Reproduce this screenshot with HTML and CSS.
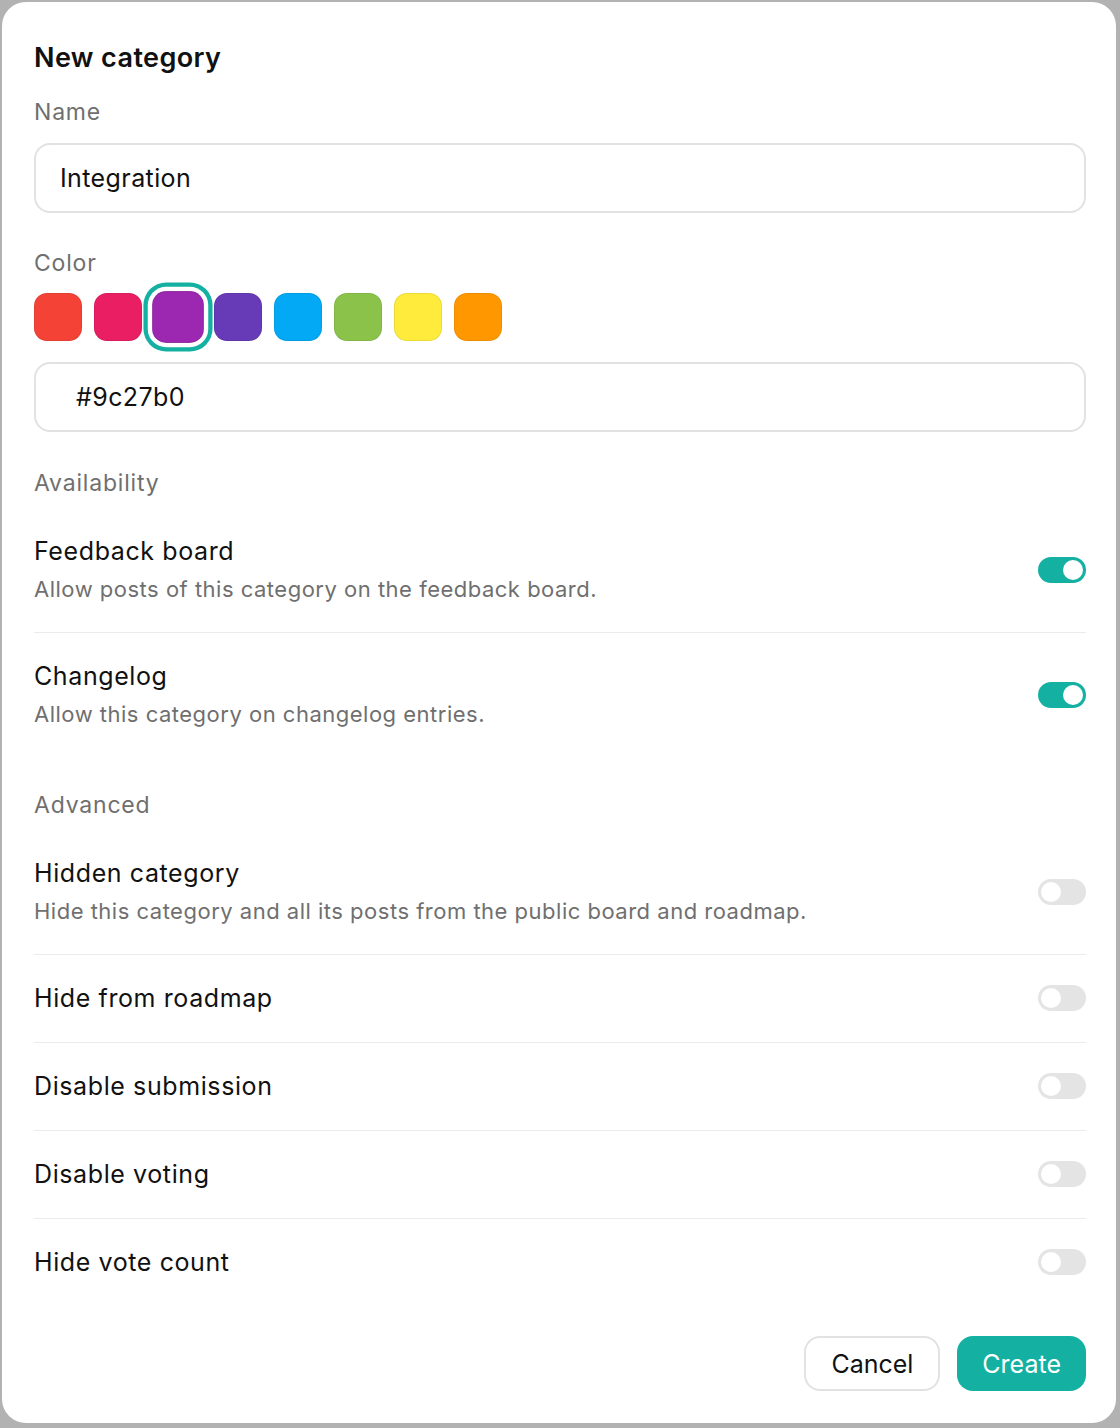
FILE: index.html
```html
<!DOCTYPE html>
<html lang="en">

<head>
    <meta charset="UTF-8">
    <meta name="viewport" content="width=device-width, initial-scale=1.0">
    <title>New category</title>
    <link rel="stylesheet" href="styles.css">
</head>

<body>
    <div class="dialog">
        <h1 class="dialog-title">New category</h1>

        <label class="field-label" for="name">Name</label>
        <input class="text-input" id="name" type="text" value="Integration">

        <div class="field-label color-label">Color</div>
        <div class="swatches">
            <button class="swatch" style="background:#f44336"></button>
            <button class="swatch" style="background:#e91e63"></button>
            <button class="swatch selected" style="background:#9c27b0"></button>
            <button class="swatch" style="background:#673ab7"></button>
            <button class="swatch" style="background:#03a9f4"></button>
            <button class="swatch" style="background:#8bc34a"></button>
            <button class="swatch" style="background:#ffeb3b"></button>
            <button class="swatch" style="background:#ff9800"></button>
        </div>
        <input class="text-input hex-input" type="text" value="#9c27b0">

        <div class="section-label">Availability</div>
        <div class="setting-list">
            <div class="setting">
                <div class="setting-text">
                    <div class="setting-title">Feedback board</div>
                    <div class="setting-desc">Allow posts of this category on the feedback board.</div>
                </div>
                <span class="toggle on"></span>
            </div>
            <div class="setting">
                <div class="setting-text">
                    <div class="setting-title">Changelog</div>
                    <div class="setting-desc">Allow this category on changelog entries.</div>
                </div>
                <span class="toggle on"></span>
            </div>
        </div>

        <div class="section-label advanced">Advanced</div>
        <div class="setting-list">
            <div class="setting">
                <div class="setting-text">
                    <div class="setting-title">Hidden category</div>
                    <div class="setting-desc">Hide this category and all its posts from the public board and roadmap.</div>
                </div>
                <span class="toggle"></span>
            </div>
            <div class="setting">
                <div class="setting-text">
                    <div class="setting-title">Hide from roadmap</div>
                </div>
                <span class="toggle"></span>
            </div>
            <div class="setting">
                <div class="setting-text">
                    <div class="setting-title">Disable submission</div>
                </div>
                <span class="toggle"></span>
            </div>
            <div class="setting">
                <div class="setting-text">
                    <div class="setting-title">Disable voting</div>
                </div>
                <span class="toggle"></span>
            </div>
            <div class="setting">
                <div class="setting-text">
                    <div class="setting-title">Hide vote count</div>
                </div>
                <span class="toggle"></span>
            </div>
        </div>

        <div class="dialog-actions">
            <button class="btn btn-secondary">Cancel</button>
            <button class="btn btn-primary">Create</button>
        </div>
    </div>
</body>

</html>
```

FILE: styles.css
```css
:root {
    --teal: #14b1a2;
    --text: #111111;
    --muted: #6f6f6f;
    --border: #e2e2e2;
    --white: #ffffff;
}

* {
    margin: 0;
    padding: 0;
    box-sizing: border-box;
}

body {
    font-family: 'Inter', 'Noto Sans', sans-serif;
    background-color: #b2b2b2;
    color: var(--text);
    padding: 2px 4px 4px 2px;
}

.dialog {
    background: var(--white);
    border-radius: 24px;
    padding: 40px 30px 32px 32px;
    display: flex;
    flex-direction: column;
}

.dialog-title {
    font-size: 27px;
    font-weight: 600;
    line-height: 32px;
    letter-spacing: 0.4px;
    margin-bottom: 23px;
}

.field-label {
    display: block;
    font-size: 23px;
    line-height: 30px;
    letter-spacing: 0.8px;
    color: var(--muted);
    margin-bottom: 16px;
}

.color-label {
    margin-top: 35px;
    margin-bottom: 15px;
}

.text-input {
    width: 100%;
    height: 70px;
    border: 2px solid var(--border);
    border-radius: 16px;
    padding: 0 24px;
    font-family: inherit;
    font-size: 25px;
    letter-spacing: 0.4px;
    color: var(--text);
    background: var(--white);
    outline: none;
}

.hex-input {
    padding-left: 40px;
}

.swatches {
    display: flex;
    gap: 12px;
    margin-bottom: 21px;
}

.swatch {
    width: 48px;
    height: 48px;
    border-radius: 13px;
    border: 1px solid rgba(0, 0, 0, 0.07);
    cursor: pointer;
}

.swatch.selected {
    transform: scale(1.08);
    box-shadow: 0 0 0 4px var(--white), 0 0 0 8px var(--teal);
    position: relative;
    z-index: 1;
}

.section-label {
    font-size: 23px;
    line-height: 30px;
    letter-spacing: 0.8px;
    color: var(--muted);
    margin-top: 36px;
    margin-bottom: 10px;
}

.section-label.advanced {
    margin-top: 33px;
}

.setting-list {
    display: flex;
    flex-direction: column;
}

.setting {
    display: flex;
    align-items: center;
    justify-content: space-between;
    padding: 28px 0 29px;
    border-bottom: 1px solid #ebebeb;
}

.setting:last-child {
    border-bottom: none;
}

.setting-title {
    font-size: 25px;
    line-height: 30px;
    letter-spacing: 0.6px;
    color: var(--text);
}

.setting-desc {
    font-size: 22px;
    line-height: 28px;
    letter-spacing: 0.5px;
    color: var(--muted);
    margin-top: 9px;
}

.toggle {
    width: 48px;
    height: 26px;
    border-radius: 13px;
    background: #e4e4e4;
    position: relative;
    flex-shrink: 0;
}

.toggle::after {
    content: '';
    position: absolute;
    top: 3px;
    left: 3px;
    width: 20px;
    height: 20px;
    border-radius: 50%;
    background: var(--white);
}

.toggle.on {
    background: var(--teal);
}

.toggle.on::after {
    left: 25px;
}

.dialog-actions {
    display: flex;
    justify-content: flex-end;
    gap: 17px;
    margin-top: 30px;
}

.btn {
    height: 55px;
    padding: 0 25px;
    border-radius: 16px;
    font-family: inherit;
    font-size: 25px;
    cursor: pointer;
}

.btn-secondary {
    background: var(--white);
    border: 2px solid var(--border);
    color: var(--text);
}

.btn-primary {
    background: var(--teal);
    border: none;
    color: var(--white);
}
```
